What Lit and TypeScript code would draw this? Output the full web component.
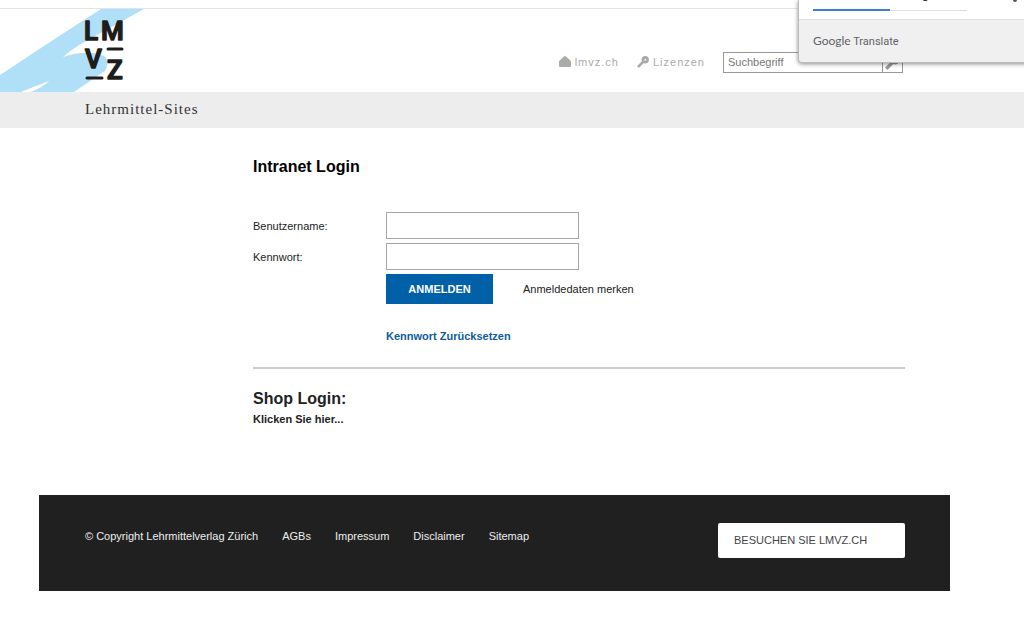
import { LitElement, html, css } from "lit";
import { customElement } from "lit/decorators.js";

const FOOTER_LINKS = ["AGBs", "Impressum", "Disclaimer", "Sitemap"];

@customElement("app-root")
export class AppRoot extends LitElement {
  static styles = css`
    :host {
      display: block;
      min-height: 100vh;
      overflow: hidden;
      position: relative;
      background: #fff;
      color: #222;
      font: 11px/16px "Liberation Sans", Arial, sans-serif;
    }
    * { box-sizing: border-box; }
    a { color: inherit; text-decoration: none; }
    h1, h2, p { margin: 0; }
    .header {
      display: flex;
      align-items: flex-end;
      margin-top: 8px;
      height: 84px;
      border-top: 1px solid #e4e4e4;
      padding-right: 121px;
    }
    .brand { display: block; height: 83px; width: 150px; }
    .brand svg { display: block; }
    .logo { font: 500 26px "Roboto", sans-serif; fill: #1d1d1b; stroke: #1d1d1b; stroke-width: 1.5; stroke-linejoin: round; }
    .tools {
      display: flex;
      align-items: center;
      margin-left: auto;
      margin-bottom: 19px;
      height: 22px;
      color: #aaa;
      letter-spacing: 1px;
    }
    .tool { display: flex; align-items: center; gap: 4px; margin-right: 18px; }
    .search {
      display: flex;
      width: 180px;
      height: 21px;
      border: 1px solid #999;
      letter-spacing: normal;
    }
    .search input {
      flex: 1;
      min-width: 0;
      border: 0;
      padding: 0 4px;
      font: inherit;
      color: #666;
      background: #fff;
    }
    .search input::placeholder { color: #777; opacity: 1; }
    .search button {
      width: 20px;
      border: 0;
      border-left: 1px solid #999;
      padding: 2px;
      background: #fff;
    }
    .search svg { display: block; }
    .band {
      height: 36px;
      padding-left: 85px;
      background: #ededed;
      color: #333;
      font: 15px/34px "Liberation Serif", "Times New Roman", serif;
      letter-spacing: 1px;
    }
    .content { margin: 28px 119px 0 253px; }
    h1, h2 { font-size: 16px; line-height: 22px; }
    .title { color: #000; }
    .form {
      display: grid;
      grid-template-columns: 133px 1fr;
      row-gap: 4px;
      align-items: center;
      margin-top: 34px;
    }
    .field {
      width: 193px;
      height: 27px;
      border: 1px solid #a5a5a5;
      padding: 0 6px;
      font: inherit;
    }
    .actions { grid-column: 2; display: flex; align-items: center; gap: 30px; }
    .submit {
      width: 107px;
      height: 30px;
      border: 0;
      padding: 0;
      background: #0060a8;
      color: #fff;
      font: bold 11px/16px "Liberation Sans", Arial, sans-serif;
    }
    .reset { grid-column: 2; margin-top: 20px; color: #0f5c9c; font-weight: bold; justify-self: start; }
    .shop { margin-top: 23px; padding-top: 19px; border-top: 2px solid #ccc; }
    .shop a { font-weight: bold; display: inline-block; margin-top: 1px; }
    .footer {
      display: flex;
      align-items: center;
      justify-content: space-between;
      height: 96px;
      margin: 68px 74px 0 39px;
      padding: 0 45px 0 46px;
      background: #202020;
      color: #eee;
    }
    .links { display: flex; gap: 24px; padding-bottom: 14px; }
    .visit {
      width: 187px;
      margin-bottom: 6px;
      padding: 9px 16px 10px;
      border-radius: 2px;
      background: #fff;
      color: #444;
    }
    .popup {
      position: absolute;
      top: 0;
      right: -8px;
      width: 234px;
      height: 63px;
      display: flex;
      flex-direction: column;
      border: 1px solid #bbb;
      border-top: 0;
      border-radius: 0 0 4px 4px;
      background: #f0f0f0;
      color: #5f6368;
      font-family: "Roboto", sans-serif;
      box-shadow: 0 1px 4px rgba(0, 0, 0, 0.45);
    }
    .tabs {
      display: flex;
      flex: none;
      align-items: flex-end;
      height: 20px;
      padding: 0 14px 8px 14px;
      border-bottom: 1px solid #ddd;
      background: #fff;
    }
    .tab {
      width: 77px;
      height: 32px;
      border: 0;
      border-bottom: 1px solid #ddd;
      padding: 7px 0 8px;
      background: none;
      color: #333;
      font: 500 13px/16px "Roboto", sans-serif;
    }
    .tab.active { border-bottom: 2px solid #3d7fcc; color: #3d7fcc; }
    .more { margin-left: auto; height: 32px; border: 0; padding: 0; background: none; }
    .more svg { display: block; }
    .google { display: flex; flex: 1; align-items: center; padding-left: 14px; }
    .google p { font: 11px/16px "Roboto", sans-serif; }
    .google b { font: 12px/16px "Lato", sans-serif; }
  `;

  private key(size: number, color: string) {
    return html`<svg width=${size} height=${size} viewBox="0 0 12 12" fill="none" stroke=${color} aria-hidden="true">
      <circle cx="8.2" cy="3.8" r="2.3" stroke-width="2.8"></circle>
      <path d="M6.6 5.4 1 11" stroke-width="2.6"></path>
    </svg>`;
  }

  render() {
    return html`
      <header class="header">
        <a class="brand" href="#" aria-label="LMVZ">
          <svg width="150" height="83" viewBox="0 0 150 83">
            <path fill="#b0dff8" d="M0 66 50 33 101 0h43L88 31C78 36 70 42 63 48c14-5 31-6 41-1 5 4 4 10 1 15L74 83H31c7-3 13-6 18-11-10 4-19 7-28 11H0z"></path>
            <g class="logo">
              <text x="84" y="31">L</text>
              <text x="101" y="31">M</text>
              <text x="85" y="59">V</text>
              <text x="107" y="70">Z</text>
              <path d="M108 40h14M87 69h15" stroke-width="3" stroke-linecap="round"></path>
            </g>
          </svg>
        </a>
        <div class="tools">
          <a class="tool" href="#">
            <svg width="12" height="12" viewBox="0 0 12 12" fill="#aaa" aria-hidden="true"><path d="M5 .4q1-.8 2 0l4.4 4q.6.6.6 1.4V10q0 1-1 1H1q-1 0-1-1V5.800q0-.8.6-1.400z"></path></svg>
            <span>lmvz.ch</span>
          </a>
          <a class="tool" href="#">${this.key(12, "#aaa")}<span>Lizenzen</span></a>
          <form class="search" role="search">
            <input type="search" placeholder="Suchbegriff" aria-label="Suchbegriff" />
            <button type="button" aria-label="Suchen">${this.key(15, "#999")}</button>
          </form>
        </div>
      </header>
      <div class="band">Lehrmittel-Sites</div>
      <main class="content">
        <h1 class="title">Intranet Login</h1>
        <form class="form">
          <label for="user">Benutzername:</label>
          <input class="field" id="user" type="text" />
          <label for="pass">Kennwort:</label>
          <input class="field" id="pass" type="password" />
          <div class="actions">
            <button class="submit" type="button">ANMELDEN</button>
            <span>Anmeldedaten merken</span>
          </div>
          <a class="reset" href="#">Kennwort Zurücksetzen</a>
        </form>
        <section class="shop">
          <h2>Shop Login:</h2>
          <a href="#">Klicken Sie hier...</a>
        </section>
      </main>
      <footer class="footer">
        <nav class="links">
          <span>© Copyright Lehrmittelverlag Zürich</span>
          ${FOOTER_LINKS.map((label) => html`<a href="#">${label}</a>`)}
        </nav>
        <a class="visit" href="#">BESUCHEN SIE LMVZ.CH</a>
      </footer>
      <aside class="popup">
        <div class="tabs">
          <button class="tab active" type="button" aria-label="German"></button>
          <button class="tab" type="button">English</button>
          <button class="more" type="button" aria-label="Optionen">
            <svg width="4" height="32" viewBox="0 0 4 32" fill="#555"><circle cx="2" cy="9" r="2"></circle><circle cx="2" cy="15" r="2"></circle><circle cx="2" cy="21" r="2"></circle></svg>
          </button>
        </div>
        <div class="google"><p><b>Google</b> Translate</p></div>
      </aside>
    `;
  }
}
